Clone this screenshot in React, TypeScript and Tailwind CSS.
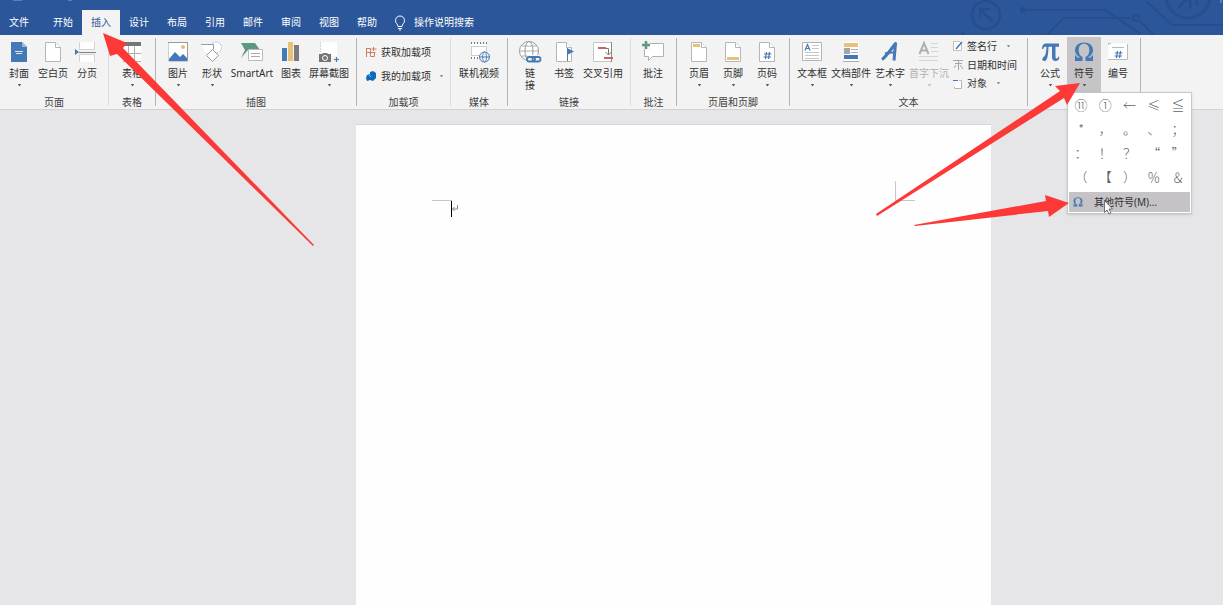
import React, { useState } from 'react';

const BLUE = '#4478b6';
const LINE = '#9a9a9a';

/* ---------- Icons (24 x 22 grid) ---------- */

const Svg: React.FC<{ children: React.ReactNode }> = ({ children }) => (
  <svg viewBox="0 0 24 22" className="h-[22px] w-6 shrink-0" fill="none" aria-hidden="true">
    {children}
  </svg>
);

const Sheet: React.FC<{ fill?: string; stroke?: string }> = ({ fill = '#fff', stroke = '#b6b6b6' }) => (
  <>
    <path d="M4.500 1.500h10l5 5v14h-15z" fill={fill} stroke={stroke} />
    <path d="M14.500 1.500v5h5" fill="#fff" stroke={stroke} />
  </>
);

const OmegaShape: React.FC = () => (
  <path
    fillRule="evenodd"
    d="M3 14.500h1.200c.3 1.500.8 2 2 2h2.300C5 15 3 12.500 3 9.200 3 4.600 6.800 1.500 12 1.500s9 3.100 9 7.700c0 3.300-2 5.800-5.500 7.300h2.300c1.200 0 1.700-.5 2-2H21V20h-7.500v-4c2.500-1 3.800-3.500 3.800-6.800 0-4-2-6.400-5.300-6.400S6.700 5.200 6.700 9.200c0 3.300 1.300 5.800 3.800 6.800v4H3z"
    fill={BLUE}
  />
);

const icons: Record<string, React.ReactNode> = {
  cover: (
    <Svg>
      <path d="M4 1h11l5 5v15H4z" fill={BLUE} />
      <path d="M15 1v5h5z" fill="#9dbbe0" />
      <path d="M8 10.500h8M9 12.500h6" stroke="#dfe9f5" />
    </Svg>
  ),
  blank: <Svg><Sheet /></Svg>,
  pageBreak: (
    <Svg>
      <path d="M5 1h15v8H5zM5 13h15v8H5z" fill="#fff" />
      <path d="M4.500 1v7.500h15V1M4.500 21v-7.500h15V21" stroke="#d2d2d2" />
      <path d="M4 11.500h17" stroke="#808080" />
      <path d="M0 8l4 3-4 3z" fill={BLUE} />
    </Svg>
  ),
  table: (
    <Svg>
      <path d="M3 2h18v18H3z" fill="#fff" />
      <path d="M3 1h18v4H3z" fill="#6f7874" />
      <path d="M3 12.500h18M8.500 5v15M14.500 5v15M3 20.500h18" stroke="#b0b0b0" />
    </Svg>
  ),
  picture: (
    <Svg>
      <path d="M2.500 1.500h19v19h-19z" fill="#fff" stroke="#d0d0d0" />
      <path d="M21.500 1v19M2 1.500h20" stroke="#999" />
      <circle cx="17" cy="6" r="2" fill="#e5bd73" />
      <path d="M3 18l6-7 5 5 3-3 4 4v3H3z" fill={BLUE} />
    </Svg>
  ),
  shapes: (
    <Svg>
      <circle cx="16" cy="6.500" r="5.500" fill="#fff" stroke="#a5bfe0" strokeDasharray="2 1" />
      <path d="M1 3h12v9H6z" fill="#fff" />
      <path d="M1 3.500h12.500v5" stroke={LINE} />
      <path d="M12.500 8.500l6 6-6 6-6-6z" fill="#fff" stroke={LINE} />
    </Svg>
  ),
  smartArt: (
    <Svg>
      <path d="M1 2h14l5 7H8l-7 8 4-8z" fill="#5b9a80" />
      <path d="M8.500 8.500h14v11h-14z" fill="#fff" stroke="#bbb" />
      <path d="M11 12.500h9M11 15.500h9" stroke="#aaa" />
    </Svg>
  ),
  chart: (
    <Svg>
      <path d="M3 7h5v13H3z" fill={BLUE} />
      <path d="M9 1h5v19H9z" fill="#e8c077" />
      <path d="M15 4h5v16h-5z" fill="#7b7b7b" />
    </Svg>
  ),
  screenshot: (
    <Svg>
      <path d="M4 1h16v14H4z" fill="#fff" />
      <path d="M3.500 1v10" stroke="#d5d5d5" strokeDasharray="2 1" />
      <path d="M2 13h3l1-1h4l1 1h3v8H2z" fill="#757575" />
      <circle cx="8" cy="17" r="2.500" fill="#757575" stroke="#fff" />
      <path d="M19.500 16v5M17 18.500h5" stroke={BLUE} strokeWidth="1.200" />
    </Svg>
  ),
  video: (
    <Svg>
      <path d="M4 3h15v15H4z" fill="#fff" />
      <path d="M4 2h16M4 17h8" stroke="#777" strokeWidth="2" strokeDasharray="1 2" />
      <path d="M4.500 5.500h15v6M4.500 5.500v9h8" stroke="#cdcdcd" />
      <circle cx="17.500" cy="16" r="5" fill="#f3f3f3" stroke={BLUE} />
      <ellipse cx="17.500" cy="16" rx="2" ry="5" stroke={BLUE} strokeWidth="0.800" />
      <path d="M12.500 16h10" stroke={BLUE} />
    </Svg>
  ),
  link: (
    <Svg>
      <circle cx="11" cy="10" r="9.500" fill="#fff" stroke={LINE} />
      <ellipse cx="11" cy="10" rx="4" ry="9.500" stroke={LINE} />
      <path d="M2 10h18M4 5h14M4 15h8" stroke={LINE} strokeWidth="0.800" />
      <path d="M9 14h15v8H9z" fill="#f3f3f3" />
      <rect x="9" y="16" width="8" height="4.500" rx="2.200" stroke={BLUE} strokeWidth="1.800" />
      <rect x="14.500" y="16" width="8" height="4.500" rx="2.200" stroke={BLUE} strokeWidth="1.800" />
    </Svg>
  ),
  bookmark: (
    <Svg>
      <Sheet />
      <path d="M15.500 7v13" stroke="#777" />
      <path d="M15 7l7 3.500-7 3.500z" fill={BLUE} />
    </Svg>
  ),
  crossRef: (
    <Svg>
      <path d="M2.500 1.500h18v19h-18z" fill="#fff" stroke="#c4c4c4" />
      <path d="M20.500 1v20" stroke="#888" />
      <path d="M7 7h8M13 17h9" stroke="#c9645c" strokeWidth="2" />
      <path d="M15 7.500h2.500v6M14.500 11l3 3 3-3" stroke="#777" />
    </Svg>
  ),
  comment: (
    <Svg>
      <path d="M3.500 2.500h19v13h-11l-4 4v-4h-4z" fill="#fff" stroke="#b0b0b0" />
      <path d="M0 0h9v8H0z" fill="#f3f3f3" />
      <path d="M5 0v8M1 4h8" stroke="#5b9a80" strokeWidth="2.500" />
    </Svg>
  ),
  header: (
    <Svg>
      <Sheet />
      <path d="M6 3h7v3H6z" fill="#e8c077" />
    </Svg>
  ),
  footer: (
    <Svg>
      <Sheet />
      <path d="M6 16h12v3H6z" fill="#e8c077" />
    </Svg>
  ),
  pageNo: (
    <Svg>
      <Sheet />
      <path d="M11.500 11l-1 7M14.500 11l-1 7M9 13h7.500M8.500 16h7.500" stroke={BLUE} strokeWidth="1.200" />
    </Svg>
  ),
  textBox: (
    <Svg>
      <path d="M2.500 1.500h19v18h-19z" fill="#fff" stroke="#b4b4b4" />
      <path d="M5 9.500l2.500-6 2.500 6M6 7.500h3" stroke={BLUE} strokeWidth="1.200" />
      <path d="M12 4.500h7M12 7.500h7M5 11.500h14M5 14.500h14M5 17.500h14" stroke="#c6c6c6" />
    </Svg>
  ),
  parts: (
    <Svg>
      <path d="M5 1h15v20H5z" fill="#fff" />
      <path d="M5 2h14v4H5z" fill="#e8c077" />
      <path d="M5 7h6v6H5z" fill="#a5a5a5" />
      <path d="M12 8.500h7M12 11.500h7" stroke="#b0b0b0" />
      <path d="M5 14h14v4H5z" fill={BLUE} />
      <path d="M4 20.500h16" stroke="#aaa" />
    </Svg>
  ),
  wordArt: (
    <Svg>
      <path d="M4 18.500C8 16 13 8 17.500 2.500L16 19.500" stroke={BLUE} strokeWidth="3" strokeLinejoin="round" />
      <path d="M7 12.500c4-1.500 8-1 11-1" stroke={BLUE} strokeWidth="2" />
    </Svg>
  ),
  dropCap: (
    <Svg>
      <path d="M2.500 13L7 2l4.500 11M4 9.500h6" stroke="#b0b0b0" strokeWidth="2" />
      <path d="M14 2.500h7M14 6.500h7M14 10.500h7M2 15.500h19M2 19.500h19" stroke="#d6d6d6" />
    </Svg>
  ),
  pi: (
    <Svg>
      <path
        d="M4 8C4.300 4 5.500 2.500 8.500 2.500H21v3.200h-3.500v9.500c0 1.600.4 2.300 1.300 2.300.8 0 1.200-.6 1.400-1.700h1.200c-.2 2.800-1.500 4.200-3.800 4.200-2.400 0-3.600-1.400-3.600-4V5.700h-3.500c-.1 6-.7 10.500-2 12.800-.6 1-1.300 1.500-2.300 1.500-1.200 0-1.900-.7-1.900-1.700 0-1.200.8-1.600 1.700-2.500C7.600 14.200 8.300 11 8.600 5.700H8C6.300 5.700 5.700 6.300 5.200 8z"
        fill={BLUE}
      />
    </Svg>
  ),
  omega: <Svg><OmegaShape /></Svg>,
  number: (
    <Svg>
      <path d="M2.500 2.500h19v16h-19z" fill="#fff" />
      <path d="M2.500 4V2.500H5M21.500 3v15.500M2 18.500h19.500M6 6.500h12" stroke="#b9b9b9" />
      <path d="M11.500 10l-1 7M14.500 10l-1 7M9 12h7.500M8.500 15h7.500" stroke={BLUE} strokeWidth="1.200" />
    </Svg>
  ),
};

const Small: React.FC<{ children: React.ReactNode }> = ({ children }) => (
  <svg viewBox="0 0 12 12" className="h-3 w-3 shrink-0" fill="none" aria-hidden="true">
    {children}
  </svg>
);

const Caret: React.FC = () => (
  <svg viewBox="0 0 5 3" className="h-[3px] w-[5px]" aria-hidden="true">
    <path d="M.8 .2h3.400L2.500 2.200z" fill="currentColor" />
  </svg>
);

/* ---------- Ribbon parts ---------- */

interface BigProps {
  icon: string;
  label: string;
  caret?: boolean;
  wide?: string;
  disabled?: boolean;
  active?: boolean;
  onClick?: () => void;
}

const Big: React.FC<BigProps> = ({ icon, label, caret, wide = 'w-[34px]', disabled, active, onClick }) => (
  <button
    type="button"
    disabled={disabled}
    onClick={onClick}
    className={`flex h-14 shrink-0 flex-col items-center pt-1 ${wide} ${active ? 'bg-[#c6c4c6]' : ''} ${disabled ? 'text-[#b0b0b0]' : 'text-[#303030]'}`}
  >
    {icons[icon]}
    <span className="mt-1 whitespace-pre leading-3">{label}</span>
    {caret && <span className="flex h-3 items-center"><Caret /></span>}
  </button>
);

const Group: React.FC<{ title?: string; pad?: string; pale?: boolean; children: React.ReactNode }> = ({
  title,
  pad = 'px-[5px]',
  pale,
  children,
}) => (
  <>
    <section className="shrink-0 pt-0.5">
      <div className={`flex h-14 ${pad}`}>{children}</div>
      <h2 className="h-4 pt-px text-center leading-4 text-[#404040]">{title}</h2>
    </section>
    <div className={`mt-[3px] h-[68px] w-px shrink-0 ${pale ? 'bg-[#dcdcdc]' : 'bg-[#b4b4b4]'}`} />
  </>
);

const tabs = ['开始', '插入', '设计', '布局', '引用', '邮件', '审阅', '视图', '帮助'];

const symbols = [
  '⑪', '①', '←', '≤', '≦',
  '*', '，', '。', '、', '；',
  '：', '！', '？', '“', '”',
  '（', '【', '）', '％', '＆',
];

const Circuit: React.FC = () => (
  <svg viewBox="0 0 263 35" className="h-[35px] w-[263px]" fill="none" stroke="#264e8d" strokeWidth="2" aria-hidden="true">
    <circle cx="26" cy="15" r="14" strokeWidth="2.500" />
    <path d="M33 22L20 9M20 19V9h10" strokeWidth="2.500" />
    <circle cx="63" cy="10" r="3" fill="#264e8d" stroke="none" />
    <path d="M64 10h81l36 24M88 34l16-16h67" />
    <circle cx="176" cy="18" r="3" />
    <path d="M179 20l14 14M187 2l25 23h51" />
    <circle cx="228" cy="-4" r="22" strokeWidth="3" />
    <path d="M218 8l12-12M230 0v9M237-4v10" strokeWidth="3" />
    <circle cx="3" cy="33" r="2" fill="#264e8d" stroke="none" />
  </svg>
);

const App: React.FC = () => {
  const [tab, setTab] = useState('插入');
  const [menuOpen, setMenuOpen] = useState(true);

  return (
    <div className="relative flex min-h-screen flex-col overflow-hidden bg-[#e6e6e8] font-['Noto_Sans','Noto_Sans_CJK_SC',sans-serif] text-[10px]">
      {/* Title bar and tabs */}
      <header className="relative flex h-[35px] items-end bg-[#2b579a] text-white">
        <div className="absolute right-0 top-0"><Circuit /></div>
        <nav className="flex shrink-0">
          <button type="button" className="mr-1.5 h-[25px] w-[38px]">文件</button>
          {tabs.map((t) => (
            <button
              key={t}
              type="button"
              onClick={() => setTab(t)}
              className={`h-[25px] w-[38px] ${t === tab ? 'bg-[#f3f3f3] text-[#2b579a]' : ''}`}
            >
              {t}
            </button>
          ))}
        </nav>
        <button type="button" className="relative ml-2 flex h-[25px] shrink-0 items-center gap-2">
          <svg viewBox="0 0 12 16" className="h-4 w-3" fill="none" stroke="#fff" aria-hidden="true">
            <path d="M4 11.500C4 9 1.500 8.500 1.500 5.500a4.500 4.500 0 0 1 9 0c0 3-2.500 3.500-2.500 6zM4 13.500h4M5 15h2" />
          </svg>
          操作说明搜索
        </button>
      </header>

      {/* Ribbon */}
      <div className="relative z-10 flex h-[75px] border-b border-[#d2d2d2] bg-[#f3f3f3]">
        <Group title="页面" pad="pl-0.5 pr-1" pale>
          <Big icon="cover" label="封面" caret />
          <Big icon="blank" label="空白页" />
          <Big icon="pageBreak" label="分页" />
        </Group>
        <Group title="表格" pad="px-1.5">
          <Big icon="table" label="表格" caret />
        </Group>
        <Group title="插图">
          <Big icon="picture" label="图片" caret />
          <Big icon="shapes" label="形状" caret />
          <Big icon="smartArt" label="SmartArt" wide="w-[46px]" />
          <Big icon="chart" label="图表" wide="w-8" />
          <Big icon="screenshot" label="屏幕截图" caret wide="w-11" />
        </Group>
        <Group title="加载项" pad="pl-2 pr-1" pale>
          <div className="flex w-[81px] flex-col pt-[3px] text-[#303030]">
            <button type="button" className="flex h-6 items-center gap-1 whitespace-nowrap">
              <Small>
                <path d="M1.500 2v9M1.500 2.500h4v8M1.500 6.500h9M8.500 1v4M6.500 3h5M9.500 6v4.500h-4" stroke="#d47a5c" />
              </Small>
              获取加载项
            </button>
            <button type="button" className="flex h-6 items-center gap-1 whitespace-nowrap">
              <Small>
                <path d="M5 2l3-1 3 2v5l-3 3-3-1-3 1-1-3 1-3 3-1z" fill="#0f6cbd" />
                <path d="M4 5l2 2" stroke="#8ec3ee" />
              </Small>
              我的加载项
              <span className="ml-1 text-[#777]"><Caret /></span>
            </button>
          </div>
        </Group>
        <Group title="媒体" pad="px-1.5">
          <Big icon="video" label="联机视频" wide="w-11" />
        </Group>
        <Group title="链接" pale>
          <Big icon="link" label={'链\n接'} />
          <Big icon="bookmark" label="书签" />
          <Big icon="crossRef" label="交叉引用" wide="w-11" />
        </Group>
        <Group title="批注" pad="pl-[5px] pr-1.5">
          <Big icon="comment" label="批注" />
        </Group>
        <Group title="页眉和页脚">
          <Big icon="header" label="页眉" caret />
          <Big icon="footer" label="页脚" caret />
          <Big icon="pageNo" label="页码" caret />
        </Group>
        <Group title="文本">
          <Big icon="textBox" label="文本框" caret />
          <Big icon="parts" label="文档部件" caret wide="w-11" />
          <Big icon="wordArt" label="艺术字" caret />
          <Big icon="dropCap" label="首字下沉" caret wide="w-11" disabled />
          <div className="flex w-[71px] flex-col pl-px text-[#303030]">
            <button type="button" className="flex h-[19px] items-center gap-[3px]">
              <Small>
                <path d="M1.500 1.500h6l2 2v7h-8z" fill="#fff" stroke="#c0c0c0" />
                <path d="M4 9l6-7" stroke={BLUE} strokeWidth="1.500" />
              </Small>
              签名行
              <span className="ml-1.5 text-[#777]"><Caret /></span>
            </button>
            <button type="button" className="flex h-[19px] items-center gap-[3px] whitespace-nowrap">
              <Small>
                <path d="M1 1.500h10M3 4.500h7M6.500 2v9M2 9l2-3M8 6l3 4" stroke="#a5a5a5" />
              </Small>
              日期和时间
            </button>
            <button type="button" className="flex h-[19px] items-center gap-[3px]">
              <Small>
                <path d="M4 2h6v9H2V6h2z" fill="#fff" />
                <path d="M7 2.500h2.500v8h-7v-2" stroke="#b5b5b5" />
                <path d="M1 2.500h5" stroke={BLUE} />
              </Small>
              对象
              <span className="ml-1.5 text-[#777]"><Caret /></span>
            </button>
          </div>
        </Group>
        <Group>
          <Big icon="pi" label="公式" caret />
          <div className="relative">
            <Big icon="omega" label="符号" caret active={menuOpen} onClick={() => setMenuOpen(!menuOpen)} />
            {menuOpen && (
              <div className="absolute left-0 top-[55px] w-[125px] border border-[#c8c8c8] bg-white pb-px shadow-sm">
                <div className="grid grid-cols-5 px-px">
                  {symbols.map((s) => (
                    <button
                      key={s}
                      type="button"
                      className="h-6 font-['Noto_Sans_CJK_SC',sans-serif] text-[13px] font-light leading-6 text-[#606060]"
                    >
                      {s}
                    </button>
                  ))}
                </div>
                <button
                  type="button"
                  className="mx-px mt-[3px] flex h-5 w-[121px] items-center gap-2.5 bg-[#c5c3c5] pl-[3px] text-[#303030]"
                >
                  <svg viewBox="0 0 24 22" className="h-3 w-3" fill="none" aria-hidden="true">
                    <OmegaShape />
                  </svg>
                  其他符号(M)...
                </button>
              </div>
            )}
          </div>
          <Big icon="number" label="编号" />
        </Group>
      </div>

      {/* Document */}
      <main className="flex flex-1 pl-[356px] pr-[232px] pt-3.5">
        <div className="flex-1 border-t border-[#d6d6d8] bg-[#fefefe]">
          <div className="flex justify-between px-[76px] pt-14">
            <svg viewBox="0 0 20 20" className="h-5 w-5" aria-hidden="true">
              <path d="M0 19.500h20" stroke="#c4c8c8" />
            </svg>
            <svg viewBox="0 0 20 20" className="h-5 w-5" fill="none" aria-hidden="true">
              <path d="M.5 0v19.500H20" stroke="#c4c8c8" />
            </svg>
          </div>
          <div className="px-[95px]">
            <svg viewBox="0 0 10 16" className="h-4 w-2.5" fill="none" aria-hidden="true">
              <path d="M.5 0v16" stroke="#000" />
              <path d="M6.500 4v4h-5M3.500 6l-2 2 2 2" stroke="#8a8a8a" />
            </svg>
          </div>
        </div>
      </main>

      {/* Tutorial arrows and mouse pointer */}
      <svg className="pointer-events-none absolute inset-0 z-20 h-full w-full" aria-hidden="true">
        <g fill="#fd3937">
          <path d="M103 33L127 43 123 48 314 245 313 246 117 54 110 56z" />
          <path d="M1080 83L1067 105 1064 98 877 216 876 214 1060 91 1055 86z" />
          <path d="M1069 203L1049 217 1048 211 915 226 914 225 1046 201 1045 195z" />
        </g>
        <path d="M1104.500 200.500v12l2.500-2.500 2 4 2-1-2-4h3.500z" fill="#fff" stroke="#555" strokeWidth="0.800" />
        <path d="M13 0h9M68 0h4M1221 0v3" stroke="#8fa8cc" strokeWidth="1" />
      </svg>
    </div>
  );
};

export default App;
